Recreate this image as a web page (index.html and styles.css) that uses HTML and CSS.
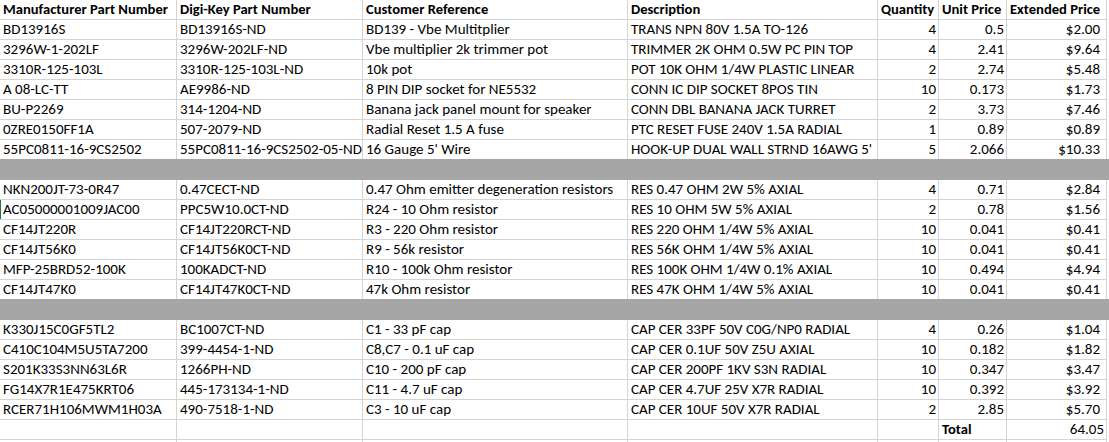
FILE: index.html
```html
<!DOCTYPE html>
<html lang="en">
<head>
<meta charset="utf-8">
<title>Parts list</title>
<link rel="stylesheet" href="styles.css">
</head>
<body>
<div class="sheet">
  <div class="row head">
    <div class="c">Manufacturer Part Number</div><div class="c">Digi-Key Part Number</div><div class="c">Customer Reference</div><div class="c">Description</div><div class="c">Quantity</div><div class="c">Unit Price</div><div class="c">Extended Price</div>
  </div>
  <div class="row"><div class="c">BD13916S</div><div class="c">BD13916S-ND</div><div class="c">BD139 - Vbe Multitplier</div><div class="c">TRANS NPN 80V 1.5A TO-126</div><div class="c n">4</div><div class="c n">0.5</div><div class="c n d">$2.00</div></div>
  <div class="row"><div class="c">3296W-1-202LF</div><div class="c">3296W-202LF-ND</div><div class="c">Vbe multiplier 2k trimmer pot</div><div class="c">TRIMMER 2K OHM 0.5W PC PIN TOP</div><div class="c n">4</div><div class="c n">2.41</div><div class="c n d">$9.64</div></div>
  <div class="row"><div class="c">3310R-125-103L</div><div class="c">3310R-125-103L-ND</div><div class="c">10k pot</div><div class="c">POT 10K OHM 1/4W PLASTIC LINEAR</div><div class="c n">2</div><div class="c n">2.74</div><div class="c n d">$5.48</div></div>
  <div class="row"><div class="c">A 08-LC-TT</div><div class="c">AE9986-ND</div><div class="c">8 PIN DIP socket for NE5532</div><div class="c">CONN IC DIP SOCKET 8POS TIN</div><div class="c n">10</div><div class="c n">0.173</div><div class="c n d">$1.73</div></div>
  <div class="row"><div class="c">BU-P2269</div><div class="c">314-1204-ND</div><div class="c">Banana jack panel mount for speaker</div><div class="c">CONN DBL BANANA JACK TURRET</div><div class="c n">2</div><div class="c n">3.73</div><div class="c n d">$7.46</div></div>
  <div class="row"><div class="c">0ZRE0150FF1A</div><div class="c">507-2079-ND</div><div class="c">Radial Reset 1.5 A fuse</div><div class="c">PTC RESET FUSE 240V 1.5A RADIAL</div><div class="c n">1</div><div class="c n">0.89</div><div class="c n d">$0.89</div></div>
  <div class="row"><div class="c">55PC0811-16-9CS2502</div><div class="c">55PC0811-16-9CS2502-05-ND</div><div class="c">16 Gauge 5' Wire</div><div class="c">HOOK-UP DUAL WALL STRND 16AWG 5'</div><div class="c n">5</div><div class="c n">2.066</div><div class="c n d">$10.33</div></div>
  <div class="sep"></div>
  <div class="row"><div class="c">NKN200JT-73-0R47</div><div class="c">0.47CECT-ND</div><div class="c">0.47 Ohm emitter degeneration resistors</div><div class="c">RES 0.47 OHM 2W 5% AXIAL</div><div class="c n">4</div><div class="c n">0.71</div><div class="c n d">$2.84</div></div>
  <div class="row"><div class="c sel">AC05000001009JAC00</div><div class="c">PPC5W10.0CT-ND</div><div class="c">R24 - 10 Ohm resistor</div><div class="c">RES 10 OHM 5W 5% AXIAL</div><div class="c n">2</div><div class="c n">0.78</div><div class="c n d">$1.56</div></div>
  <div class="row"><div class="c">CF14JT220R</div><div class="c">CF14JT220RCT-ND</div><div class="c">R3 - 220 Ohm resistor</div><div class="c">RES 220 OHM 1/4W 5% AXIAL</div><div class="c n">10</div><div class="c n">0.041</div><div class="c n d">$0.41</div></div>
  <div class="row"><div class="c">CF14JT56K0</div><div class="c">CF14JT56K0CT-ND</div><div class="c">R9 - 56k resistor</div><div class="c">RES 56K OHM 1/4W 5% AXIAL</div><div class="c n">10</div><div class="c n">0.041</div><div class="c n d">$0.41</div></div>
  <div class="row"><div class="c">MFP-25BRD52-100K</div><div class="c">100KADCT-ND</div><div class="c">R10 - 100k Ohm resistor</div><div class="c">RES 100K OHM 1/4W 0.1% AXIAL</div><div class="c n">10</div><div class="c n">0.494</div><div class="c n d">$4.94</div></div>
  <div class="row"><div class="c">CF14JT47K0</div><div class="c">CF14JT47K0CT-ND</div><div class="c">47k Ohm resistor</div><div class="c">RES 47K OHM 1/4W 5% AXIAL</div><div class="c n">10</div><div class="c n">0.041</div><div class="c n d">$0.41</div></div>
  <div class="sep"></div>
  <div class="row"><div class="c">K330J15C0GF5TL2</div><div class="c">BC1007CT-ND</div><div class="c">C1 - 33 pF cap</div><div class="c">CAP CER 33PF 50V C0G/NP0 RADIAL</div><div class="c n">4</div><div class="c n">0.26</div><div class="c n d">$1.04</div></div>
  <div class="row"><div class="c">C410C104M5U5TA7200</div><div class="c">399-4454-1-ND</div><div class="c">C8,C7 - 0.1 uF cap</div><div class="c">CAP CER 0.1UF 50V Z5U AXIAL</div><div class="c n">10</div><div class="c n">0.182</div><div class="c n d">$1.82</div></div>
  <div class="row"><div class="c">S201K33S3NN63L6R</div><div class="c">1266PH-ND</div><div class="c">C10 - 200 pF cap</div><div class="c">CAP CER 200PF 1KV S3N RADIAL</div><div class="c n">10</div><div class="c n">0.347</div><div class="c n d">$3.47</div></div>
  <div class="row"><div class="c">FG14X7R1E475KRT06</div><div class="c">445-173134-1-ND</div><div class="c">C11 - 4.7 uF cap</div><div class="c">CAP CER 4.7UF 25V X7R RADIAL</div><div class="c n">10</div><div class="c n">0.392</div><div class="c n d">$3.92</div></div>
  <div class="row"><div class="c">RCER71H106MWM1H03A</div><div class="c">490-7518-1-ND</div><div class="c">C3 - 10 uF cap</div><div class="c">CAP CER 10UF 50V X7R RADIAL</div><div class="c n">2</div><div class="c n">2.85</div><div class="c n d">$5.70</div></div>
  <div class="row"><div class="c"></div><div class="c"></div><div class="c"></div><div class="c"></div><div class="c"></div><div class="c b">Total</div><div class="c n">64.05</div></div>
  <div class="row"><div class="c"></div><div class="c"></div><div class="c"></div><div class="c"></div><div class="c"></div><div class="c"></div><div class="c"></div></div>
</div>
</body>
</html>
```
FILE: styles.css
```css
html, body {
  margin: 0;
  padding: 0;
  background: #ffffff;
}
body {
  width: 1109px;
  height: 442px;
  overflow: hidden;
  font-family: "Carlito", "Lato", "Liberation Sans", sans-serif;
  font-size: 15px;
  color: #000000;
}
.sheet {
  display: flex;
  flex-direction: column;
  width: 1109px;
}
.row {
  display: grid;
  grid-template-columns: 177px 186px 265px 250px 61px 68px 100px;
  height: 20px;
}
.c {
  box-sizing: border-box;
  height: 20px;
  border-right: 1px solid #d4d4d4;
  border-bottom: 1px solid #d4d4d4;
  padding: 0 2px 0 3px;
  line-height: 19px;
  white-space: nowrap;
  overflow: visible;
}
.head .c, .b {
  font-weight: 700;
  font-size: 14.6px;
}
.n {
  text-align: right;
  padding-right: 2px;
}
.d {
  padding-right: 6px;
}
.sel {
  box-shadow: inset 1px 0 0 #217346;
}
.sep {
  height: 21px;
  margin-top: -1px;
  background: #a6a6a6;
}
```
